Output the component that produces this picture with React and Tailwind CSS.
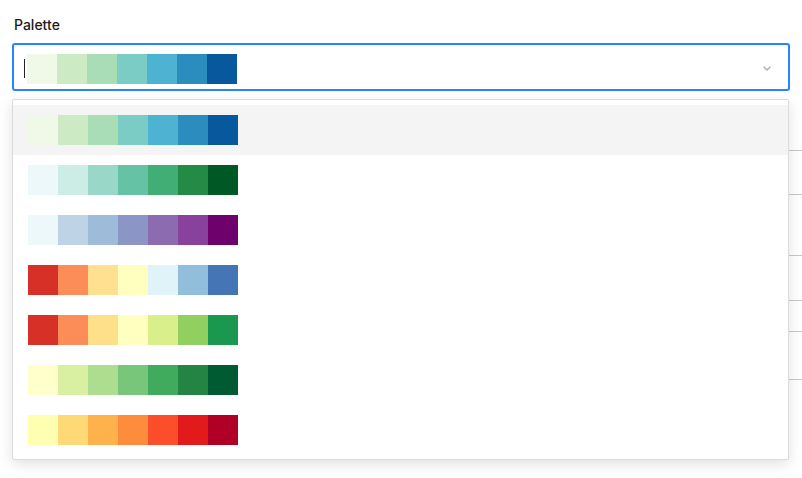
const palettes = [
  ["#f0f9e8", "#ccebc5", "#a8ddb5", "#7bccc4", "#4eb3d3", "#2b8cbe", "#08589e"],
  ["#edf8fb", "#ccece6", "#99d8c9", "#66c2a4", "#41ae76", "#238b45", "#005824"],
  ["#edf8fb", "#bfd3e6", "#9ebcda", "#8c96c6", "#8c6bb1", "#88419d", "#6e016b"],
  ["#d73027", "#fc8d59", "#fee090", "#ffffbf", "#e0f3f8", "#91bfdb", "#4575b4"],
  ["#d73027", "#fc8d59", "#fee08b", "#ffffbf", "#d9ef8b", "#91cf60", "#1a9850"],
  ["#ffffcc", "#d9f0a3", "#addd8e", "#78c679", "#41ab5d", "#238443", "#005a32"],
  ["#ffffb2", "#fed976", "#feb24c", "#fd8d3c", "#fc4e2a", "#e31a1c", "#b10026"],
];

const rowHeights = [60, 44, 61, 45, 31, 48];

const Swatches = ({ colors }) => (
  <div className="flex">
    {colors.map((c, i) => (
      <div key={i} className="h-[30px] w-[30px]" style={{ backgroundColor: c }} />
    ))}
  </div>
);

export default function App() {
  return (
    <div
      className="relative h-[478px] overflow-hidden bg-white px-3 pt-[15px]"
      style={{ fontFamily: "Inter, 'Noto Sans', sans-serif" }}
    >
      <div className="mb-2 h-5 pl-[2px] text-sm font-medium leading-5 text-[#1a1a1a]">Palette</div>

      <div className="relative">
        {/* Control */}
        <div className="flex h-12 w-[778px] items-start rounded-[3px] border-2 border-[#2684ff] pl-[10px] pr-[17px] pt-[9px]">
          <div className="mt-[5px] h-[19px] w-px bg-[#222]" />
          <div className="ml-[2px]">
            <Swatches colors={palettes[0]} />
          </div>
          <svg className="ml-auto mt-[12px]" width="8" height="5" viewBox="0 0 8 5" fill="none">
            <path d="M0.7 0.7 L4 4 L7.3 0.7" stroke="#a3abb8" strokeWidth="1.3" />
          </svg>
        </div>

        {/* Menu */}
        <div className="absolute left-0 top-[56px] z-10 w-[777px] rounded-[2px] border border-[#dcdcdc] bg-white pb-1 pt-[5px] shadow-[0_4px_14px_rgba(0,0,0,0.12)]">
          {palettes.map((p, i) => (
            <div
              key={i}
              className={`flex h-[50px] items-center pl-[15px] ${i === 0 ? "bg-[#f4f4f4]" : ""}`}
            >
              <Swatches colors={p} />
            </div>
          ))}
        </div>
      </div>

      {/* Content behind the menu */}
      <div className="-mr-3 ml-4">
        {rowHeights.map((h, i) => (
          <div key={i} className="border-b border-[#c8c8c8]" style={{ height: h }} />
        ))}
      </div>
    </div>
  );
}
